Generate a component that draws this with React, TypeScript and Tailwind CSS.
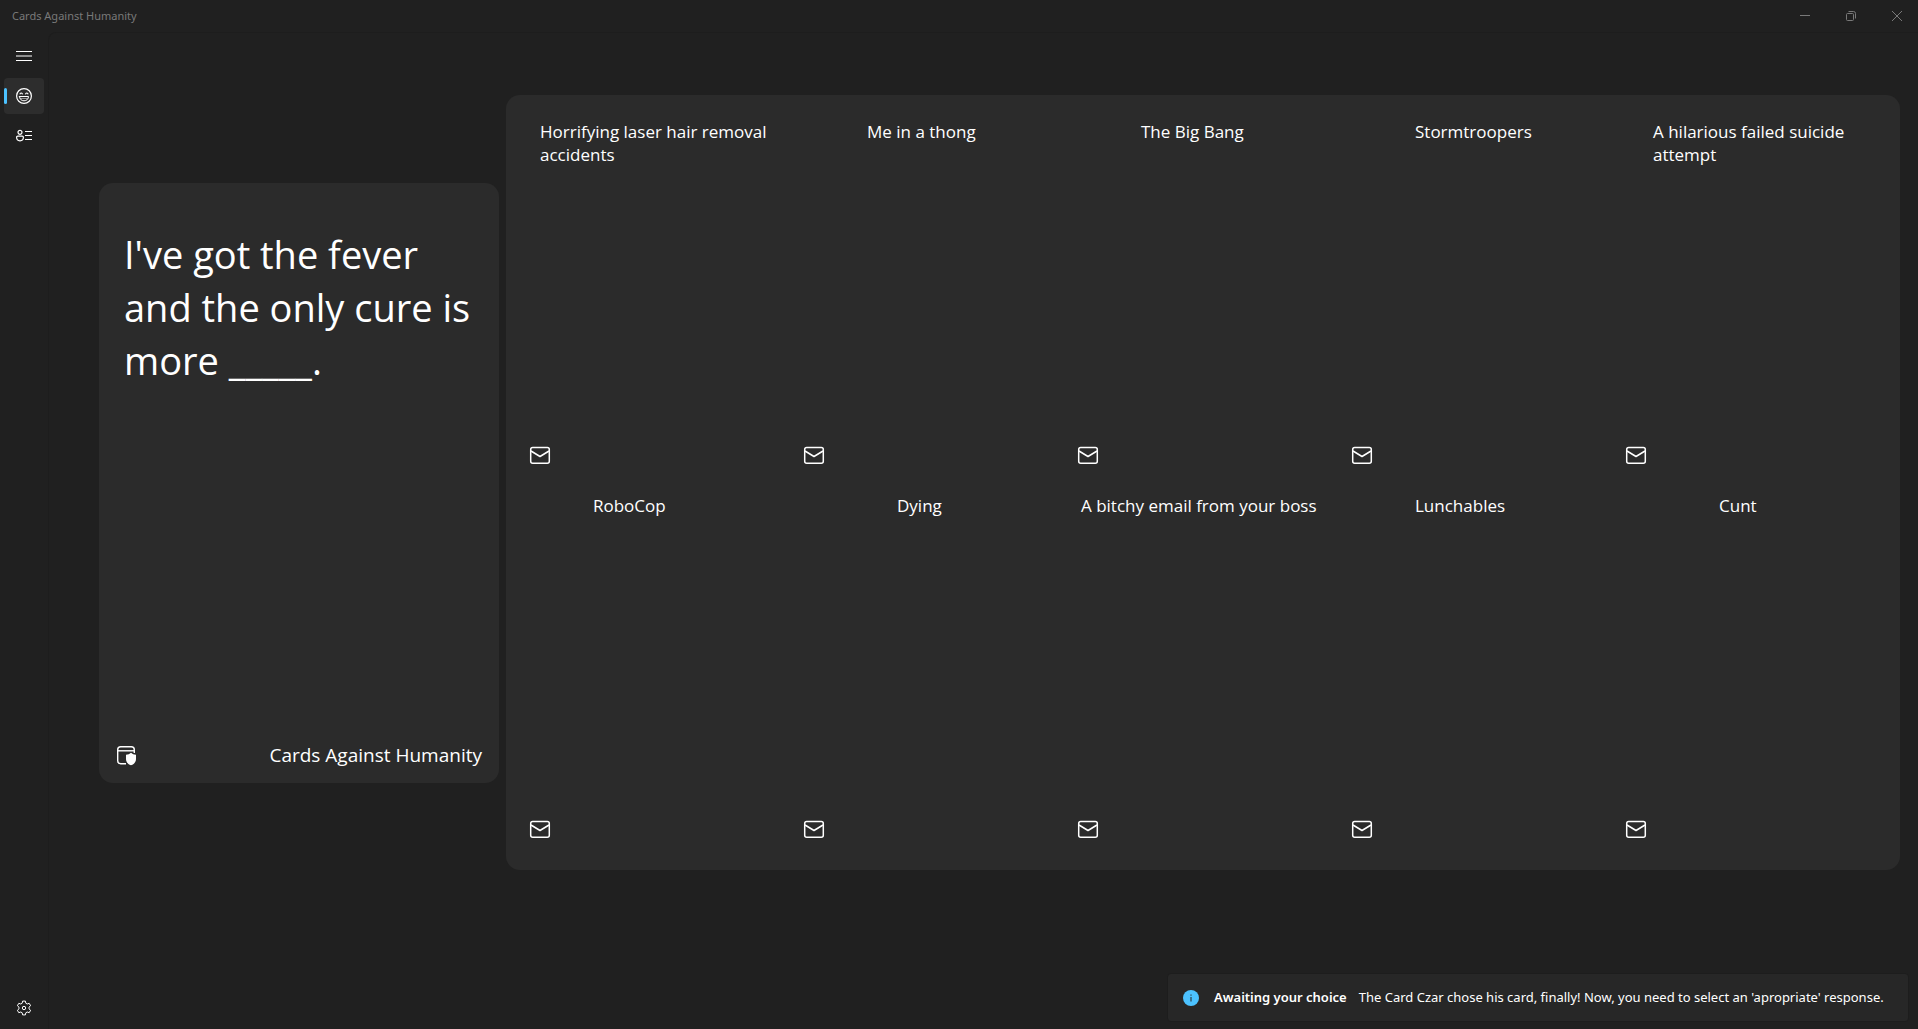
import React from "react";

type Choice = { text: string; indent: string };

const choices: Choice[] = [
  { text: "Horrifying laser hair removal accidents", indent: "pl-[22px] pr-4" },
  { text: "Me in a thong", indent: "pl-[75px]" },
  { text: "The Big Bang", indent: "pl-[75px]" },
  { text: "Stormtroopers", indent: "pl-[75px]" },
  { text: "A hilarious failed suicide attempt", indent: "pl-[39px] pr-8" },
  { text: "RoboCop", indent: "pl-[75px]" },
  { text: "Dying", indent: "pl-[105px]" },
  { text: "A bitchy email from your boss", indent: "pl-[15px]" },
  { text: "Lunchables", indent: "pl-[75px]" },
  { text: "Cunt", indent: "pl-[105px]" },
];

function MailIcon() {
  return (
    <svg viewBox="0 0 24 24" className="size-6" fill="none" stroke="currentColor" strokeWidth="1.5" aria-hidden="true">
      <rect x="2.700" y="4.500" width="18.600" height="15.800" rx="2" />
      <path d="M3 8l9 5.500L21 8" strokeLinejoin="round" />
    </svg>
  );
}

function CardShieldIcon() {
  return (
    <svg viewBox="0 0 24 24" className="size-6" fill="none" stroke="currentColor" strokeWidth="1.400" aria-hidden="true">
      <path d="M20.300 10V6.700a3 3 0 0 0-3-3H6.700a3 3 0 0 0-3 3v11a3 3 0 0 0 3 3H12" />
      <path d="M4 7.800h16" />
      <path d="M17 9.800c1.300 1.200 3 1.800 5 2v4.200c0 3-1.800 5.200-5 6.200-3.200-1-5-3.200-5-6.200v-4.200c2-.2 3.700-.8 5-2z" fill="currentColor" stroke="none" />
    </svg>
  );
}

function MenuIcon() {
  return (
    <svg viewBox="0 0 16 16" className="size-4" stroke="currentColor" aria-hidden="true">
      <path d="M0 3.500h16M0 8h16M0 12.500h16" />
    </svg>
  );
}

function LaughIcon() {
  return (
    <svg viewBox="0 0 16 16" className="size-4" fill="none" stroke="currentColor" strokeLinecap="round" aria-hidden="true">
      <circle cx="8" cy="8" r="7.400" strokeWidth="1.200" />
      <path d="M4 5.800q1.200-1.600 2.400 0M9.600 5.800q1.200-1.600 2.400 0" strokeWidth="1.100" />
      <path d="M3.500 8.500h9c0 2.700-2 4.300-4.500 4.300S3.500 11.200 3.500 8.500z" strokeLinejoin="round" />
      <path d="M4.500 10.500h7" strokeWidth=".5" />
    </svg>
  );
}

function PlayersIcon() {
  return (
    <svg viewBox="0 0 16 16" className="size-4" fill="none" stroke="currentColor" strokeWidth="1.200" aria-hidden="true">
      <circle cx="4" cy="4.300" r="2" />
      <path d="M1.800 8.100h4.400a1.200 1.200 0 0 1 1.200 1.200c0 2.200-1.400 3.500-3.400 3.500S.6 11.500.6 9.300a1.200 1.200 0 0 1 1.200-1.200z" />
      <path d="M9 3.500h7M9 7.500h7M9 11.500h7" strokeWidth="1" />
    </svg>
  );
}

function GearIcon() {
  return (
    <svg viewBox="0 0 16 16" className="size-4" fill="none" stroke="currentColor" strokeLinejoin="round" aria-hidden="true">
      <path d="M6.600 1.100h2.800l.4 2.100 1.400.8 2-.7 1.400 2.400L13 7.200v1.600l1.600 1.500-1.400 2.400-2-.7-1.400.8-.4 2.100H6.600l-.4-2.100-1.400-.8-2 .7-1.400-2.400L3 8.800V7.200L1.400 5.700l1.400-2.400 2 .7 1.400-.8z" />
      <circle cx="8" cy="8" r="1.700" />
    </svg>
  );
}

function TitleBar() {
  return (
    <header className="flex h-8 items-center justify-between overflow-hidden text-[#797979]">
      <h1 className="pl-3 font-['Noto_Sans',sans-serif] text-[11px]">Cards Against Humanity</h1>
      <div className="-mr-0.5 flex h-full">
        <button aria-label="Minimize" className="grid w-[46px] place-items-center">
          <svg viewBox="0 0 10 10" className="size-2.5" stroke="currentColor"><path d="M0 4.500h10" /></svg>
        </button>
        <button aria-label="Restore" className="grid w-[46px] place-items-center">
          <svg viewBox="0 0 10 10" className="size-2.5" fill="none" stroke="currentColor">
            <rect x=".5" y="2.500" width="7" height="7" rx="1" />
            <path d="M2.500.5h5a2 2 0 0 1 2 2v5" />
          </svg>
        </button>
        <button aria-label="Close" className="grid w-[46px] place-items-center">
          <svg viewBox="0 0 10 10" className="size-2.5" stroke="currentColor"><path d="M0 0l10 10M10 0L0 10" /></svg>
        </button>
      </div>
    </header>
  );
}

function Sidebar() {
  return (
    <nav aria-label="Main" className="flex w-12 shrink-0 flex-col gap-1 px-1 pt-1.5 pb-[3px]">
      <button aria-label="Menu" className="grid h-9 place-items-center"><MenuIcon /></button>
      <button aria-label="Play" aria-current="page" className="relative grid h-9 place-items-center rounded bg-[#2d2d2d]">
        <span className="absolute top-2.5 left-0 h-4 w-[3px] rounded-full bg-[#4cc2ff]" />
        <LaughIcon />
      </button>
      <button aria-label="Players" className="grid h-9 place-items-center"><PlayersIcon /></button>
      <button aria-label="Settings" className="mt-auto grid h-9 place-items-center"><GearIcon /></button>
    </nav>
  );
}

function PromptCard() {
  return (
    <article className="flex h-[600px] w-[400px] shrink-0 flex-col justify-between rounded-[14px] bg-[#2b2b2b] pt-[45px] pr-[17px] pb-3 pl-[15px]">
      <p className="pl-2.5 text-[38px] leading-[53px]">I've got the fever and the only cure is more _____.</p>
      <div className="flex items-center justify-between">
        <CardShieldIcon />
        <span className="text-[19px] leading-8">Cards Against Humanity</span>
      </div>
    </article>
  );
}

function ChoiceCard({ choice }: { choice: Choice }) {
  return (
    <li className="flex h-[374px] flex-col items-start justify-between pt-3 pb-[15px]">
      <p className={`${choice.indent} text-[17px] leading-[23px]`}>{choice.text}</p>
      <button aria-label={`Play ${choice.text}`} className="ml-2.5"><MailIcon /></button>
    </li>
  );
}

function Notice() {
  return (
    <div role="status" className="mr-[9px] mb-[7px] flex h-[49px] min-w-[742px] items-center self-end rounded border border-[#1d1d1d] bg-[#272727] px-[15px] font-['Noto_Sans',sans-serif] text-[13px]">
      <svg viewBox="0 0 16 16" className="mr-[15px] size-4" aria-hidden="true">
        <circle cx="8" cy="8" r="8" fill="#4cc2ff" />
        <path d="M8 7v4.500M8 4.500v1.200" stroke="#222" />
      </svg>
      <strong className="mr-3 font-semibold">Awaiting your choice</strong>
      <span>The Card Czar chose his card, finally! Now, you need to select an 'apropriate' response.</span>
    </div>
  );
}

export default function App() {
  return (
    <div className="flex min-h-screen flex-col bg-[#202020] font-['Open_Sans','Noto_Sans',sans-serif] text-white">
      <TitleBar />
      <div className="flex flex-1">
        <Sidebar />
        <main className="flex min-w-0 flex-1 flex-col rounded-tl-lg border-t border-l border-[#1d1d1d]">
          <div className="flex flex-1 items-center gap-[7px] pr-[18px] pl-[50px]">
            <PromptCard />
            <ul className="grid flex-1 grid-cols-5 rounded-[14px] bg-[#2b2b2b] px-3 pt-[13px] pb-3.5">
              {choices.map((choice) => (
                <ChoiceCard key={choice.text} choice={choice} />
              ))}
            </ul>
          </div>
          <div className="flex flex-col pt-[41px]">
            <Notice />
          </div>
        </main>
      </div>
    </div>
  );
}
